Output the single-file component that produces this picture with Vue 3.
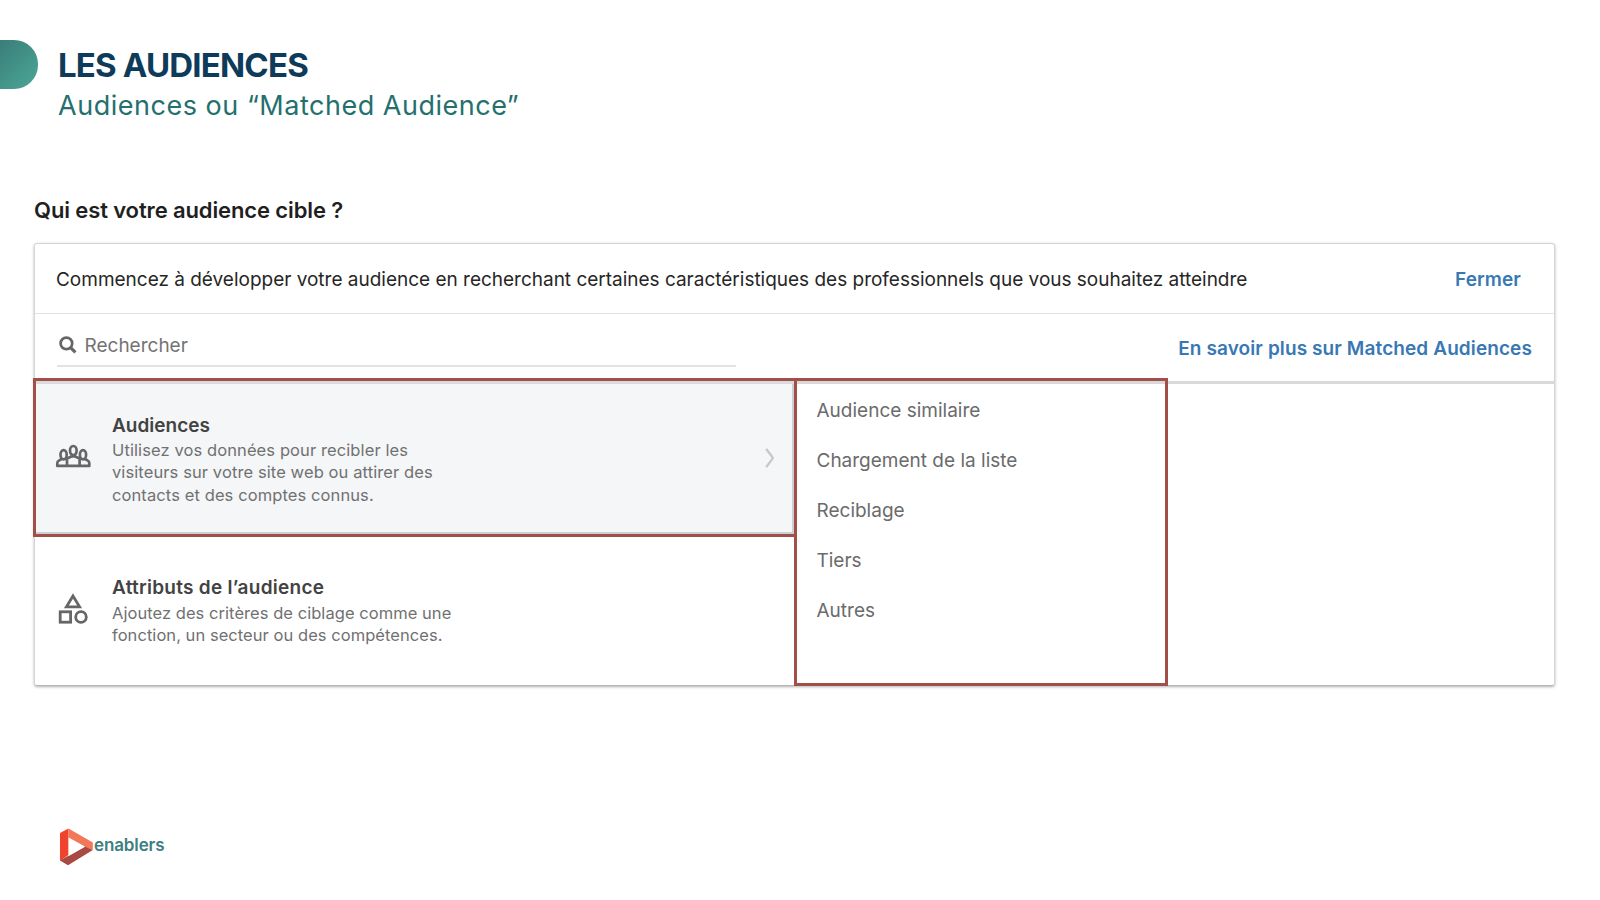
<template>
  <div class="page">
    <header class="header">
      <div class="pill"></div>
      <div class="headings">
        <h1 class="title">LES AUDIENCES</h1>
        <p class="subtitle">Audiences ou “Matched Audience”</p>
      </div>
    </header>

    <main class="main">
      <h2 class="question">Qui est votre audience cible ?</h2>
      <section class="card">
        <div class="introRow">
          <span class="intro">Commencez à développer votre audience en recherchant certaines caractéristiques des professionnels que vous souhaitez atteindre</span>
          <a class="link close">Fermer</a>
        </div>
        <div class="searchRow">
          <div class="search">
            <svg class="searchIcon" width="18" height="18" viewBox="0 0 18 18">
              <circle cx="7.4" cy="7.4" r="5.8" fill="none" stroke="#666" stroke-width="2.7" />
              <path d="M11.6 11.6L16.4 16.4" stroke="#666" stroke-width="3.2" />
            </svg>
            <span class="placeholder">Rechercher</span>
          </div>
          <a class="link learn">En savoir plus sur Matched Audiences</a>
        </div>
        <div class="body">
          <div class="categories">
            <div v-for="cat in categories" :key="cat.id" class="category" :class="[cat.id, { active: cat.id === selected }]" @click="selected = cat.id">
              <div class="iconBox">
                <svg v-if="cat.id === 'audiences'" width="36" height="24" viewBox="0 0 36 24" fill="none" stroke="#666" stroke-width="2.7" stroke-linejoin="round">
                  <ellipse cx="18.3" cy="6.6" rx="3.3" ry="4.6" />
                  <ellipse cx="8.6" cy="10.8" rx="3.1" ry="4.6" />
                  <ellipse cx="28" cy="10.8" rx="3.1" ry="4.6" />
                  <path d="M12 21.8V14.4L17 12.3H19.6L24.6 14.4V21.8" />
                  <path d="M6.6 15L3.8 16.6C2.6 17.2 2.3 18 2.3 19.2V21.9H34.3V19.2C34.3 18 34 17.2 32.8 16.6L30 15" />
                </svg>
                <svg v-else width="30" height="32" viewBox="0 0 30 32" fill="none" stroke="#666" stroke-width="2.8">
                  <path d="M15 3L21.6 13.8H8.4Z" />
                  <rect x="2.2" y="18.8" width="10.4" height="10.4" />
                  <circle cx="23" cy="24" r="5.3" />
                </svg>
              </div>
              <div class="info">
                <div class="name">{{ cat.name }}</div>
                <div class="desc" v-for="line in cat.lines" :key="line">{{ line }}</div>
              </div>
              <svg v-if="cat.id === selected" class="chevron" width="10" height="20" viewBox="0 0 10 20">
                <path d="M1.2 0.8C3 3.6 5.8 6.6 7.9 10C5.8 13.4 3 16.4 1.2 19.2" fill="none" stroke="#c6c8ca" stroke-width="2.3" />
              </svg>
            </div>
          </div>
          <ul class="options">
            <li v-for="item in options" :key="item">{{ item }}</li>
          </ul>
        </div>
      </section>
    </main>

    <footer class="footer">
      <svg width="34" height="38" viewBox="0 0 34 38">
        <path d="M0 5L8.5 0.5V27L0 33Z" fill="#ef432d" />
        <path d="M8.5 0.5L32.8 14.5V22L25.5 19L8.5 9.5Z" fill="#f27858" />
        <path d="M0 32.5L25 18.5L32.8 22L8 37.2Z" fill="#a84943" />
        <path d="M8.7 9.7L25 18.8L8.7 28Z" fill="#fff" />
      </svg>
      <span class="brand">enablers</span>
    </footer>
  </div>
</template>

<script setup>
import { ref } from 'vue'

const selected = ref('audiences')
const categories = [
  {
    id: 'audiences',
    name: 'Audiences',
    lines: [
      'Utilisez vos données pour recibler les',
      'visiteurs sur votre site web ou attirer des',
      'contacts et des comptes connus.'
    ]
  },
  {
    id: 'attributs',
    name: 'Attributs de l’audience',
    lines: [
      'Ajoutez des critères de ciblage comme une',
      'fonction, un secteur ou des compétences.'
    ]
  }
]
const options = ['Audience similaire', 'Chargement de la liste', 'Reciblage', 'Tiers', 'Autres']
</script>

<style>
body {
  margin: 0;
  background: #fff;
}
</style>

<style scoped>
* {
  box-sizing: border-box;
}
.page {
  width: 1600px;
  height: 900px;
  overflow: hidden;
  display: flex;
  flex-direction: column;
  font-family: Inter, "Liberation Sans", sans-serif;
}
h1, h2, p, ul {
  margin: 0;
  padding: 0;
}
.header {
  display: flex;
  height: 195px;
  padding-top: 40px;
  flex-shrink: 0;
}
.pill {
  width: 38px;
  height: 49px;
  border-radius: 0 24px 24px 0;
  background: linear-gradient(135deg, #397e79, #4ca797);
}
.headings {
  padding: 4px 0 0 20px;
}
.title {
  font-size: 33px;
  line-height: 42px;
  font-weight: 700;
  color: #0d3b59;
  letter-spacing: -0.82px;
  white-space: nowrap;
}
.subtitle {
  margin-top: 3px;
  font-size: 27px;
  line-height: 34px;
  font-weight: 400;
  color: #24706e;
  letter-spacing: 0.52px;
  white-space: nowrap;
}
.main {
  padding: 0 44px 0 34px;
}
.question {
  height: 48px;
  font-size: 22px;
  line-height: 30px;
  font-weight: 600;
  color: #1f1f1f;
  letter-spacing: -0.12px;
  white-space: nowrap;
}
.card {
  width: 1521px;
  height: 443px;
  border: 1px solid #d6d6d6;
  border-bottom-color: #b5b5b5;
  border-radius: 3px;
  box-shadow: 0 1px 3px rgba(0, 0, 0, 0.3);
}
.introRow {
  display: flex;
  align-items: center;
  justify-content: space-between;
  height: 70px;
  padding: 2px 33px 0 21px;
  border-bottom: 1px solid #e2e2e2;
}
.intro {
  font-size: 19px;
  color: #262626;
  letter-spacing: -0.01px;
  white-space: nowrap;
}
.link {
  font-size: 19px;
  font-weight: 600;
  color: #3878b4;
  letter-spacing: 0.1px;
  white-space: nowrap;
}
.searchRow {
  display: flex;
  justify-content: space-between;
  height: 70px;
  padding: 0 22px 0 22px;
  border-bottom: 3px solid #d9d9d9;
}
.search {
  display: flex;
  align-items: center;
  width: 679px;
  height: 53px;
  padding: 11px 0 0 2px;
  border-bottom: 2px solid #e2e2e2;
}
.placeholder {
  margin-left: 7.5px;
  font-size: 19px;
  color: #737373;
}
.learn {
  line-height: 69px;
}
.body {
  display: flex;
  height: 305px;
  margin: -6px 0 0 -2px;
}
.categories {
  width: 764px;
  border-right: 3px solid #d6d8d8;
  margin-right: -3px;
}
.category {
  display: flex;
  width: 761px;
  height: 149px;
  padding: 37px 0 0 22px;
  cursor: pointer;
}
.category.active {
  width: 764px;
  height: 159px;
  padding: 31px 0 0 19px;
  border: 3px solid #a14f48;
  background: #f4f6f8;
  box-shadow: inset 0 3px #d9dbdc, inset -2px -2px #cdd0d1;
}
.iconBox {
  display: flex;
  justify-content: center;
  width: 36px;
  margin-right: 21px;
  padding-top: 19px;
}
.active .iconBox {
  padding-top: 32px;
}
.info {
  width: 640px;
}
.name {
  font-size: 19px;
  line-height: 27px;
  font-weight: 600;
  color: #434343;
}
.attributs .name {
  letter-spacing: 0.27px;
  line-height: 28px;
}
.desc {
  font-size: 16.5px;
  line-height: 22.3px;
  color: #717171;
  letter-spacing: 0.1px;
  white-space: nowrap;
}
.attributs .desc {
  letter-spacing: 0.05px;
}
.chevron {
  margin: 36px 0 0 13px;
}
.options {
  width: 374px;
  height: 308px;
  padding: 5px 0 0 19.5px;
  list-style: none;
  border: 3px solid #a14f48;
  box-shadow: inset 0 3px #d9d9d9;
  z-index: 1;
}
.options li {
  font-size: 19px;
  line-height: 50px;
  color: #6b6b6b;
}
.footer {
  display: flex;
  margin: 142px 0 0 60px;
}
.brand {
  margin: 5px 0 0 0;
  font-size: 17px;
  line-height: 24px;
  font-weight: 600;
  color: #3d7f81;
  letter-spacing: -0.12px;
}
</style>
